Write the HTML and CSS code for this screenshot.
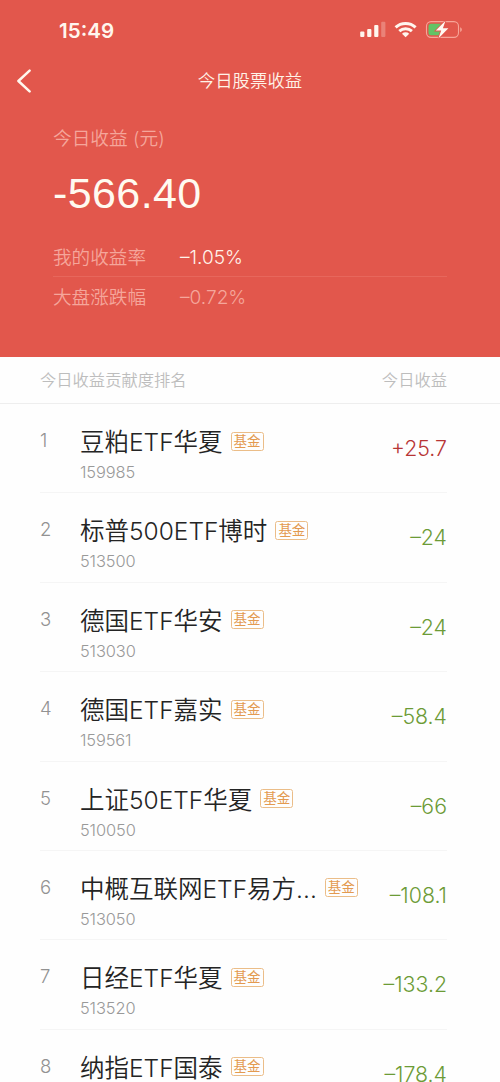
FILE: index.html
```html
<!DOCTYPE html>
<html lang="zh-CN">
<head>
<meta charset="utf-8">
<title>今日股票收益</title>
<link rel="stylesheet" href="styles.css">
</head>
<body>
<main class="screen">
  <header class="hero">
    <div class="status">
      <span class="clock">15:49</span>
      <svg class="status-icons" width="104" height="20" viewBox="0 0 104 20">
        <g fill="#fff6ee">
          <rect x="0.2" y="11.5" width="4.2" height="5.6" rx="1"/>
          <rect x="7.2" y="9" width="4.2" height="8.1" rx="1"/>
          <rect x="14.2" y="5" width="4.2" height="12.1" rx="1"/>
          <rect x="21.2" y="1.8" width="4.2" height="15.3" rx="1" opacity=".28"/>
          <path d="M45.6 17.2l-3.6-3.5a5.2 5.2 0 0 1 7.2 0z"/>
        </g>
        <g fill="none" stroke="#fff6ee" stroke-width="3">
          <path d="M35.6 7.3a14.8 14.8 0 0 1 20 0"/>
          <path d="M39.3 11.2a9.4 9.4 0 0 1 12.6 0"/>
        </g>
        <rect x="66.5" y="1.6" width="32" height="15.8" rx="4.6" fill="none" stroke="#f7a598" stroke-width="1.1"/>
        <path d="M100.2 7.2c2.2.8 2.2 3.9 0 4.7z" fill="#f7a598"/>
        <path d="M71 3.7h9.5v11.6H71a2.5 2.5 0 0 1-2.5-2.5V6.2A2.5 2.5 0 0 1 71 3.7z" fill="#63c466"/>
        <path d="M85.5.8L75.8 10.6h5.4L78.4 18.4l10-10.2h-5.5z" fill="#fff9f2" stroke="#e2574c" stroke-width="1.6" paint-order="stroke"/>
      </svg>
    </div>
    <nav class="nav">
      <svg class="back" width="16" height="26" viewBox="0 0 16 26"><path d="M12.6 2.6L1.4 13l11.2 10.4" fill="none" stroke="#fff8ee" stroke-width="2.5" stroke-linecap="round" stroke-linejoin="round"/></svg>
      <h1 class="title">今日股票收益</h1>
    </nav>
    <section class="summary">
      <p class="label">今日收益 (元)</p>
      <p class="total">-566.40</p>
      <div class="stat"><span>我的收益率</span><span class="rate bright">–1.05%</span></div>
      <div class="stat"><span>大盘涨跌幅</span><span class="rate">–0.72%</span></div>
    </section>
  </header>
  <div class="columns"><span>今日收益贡献度排名</span><span>今日收益</span></div>
  <ol class="list">
    <li class="row"><span class="rank">1</span><div class="fund"><div class="heading"><span class="name">豆粕ETF华夏</span><span class="tag">基金</span></div><span class="code">159985</span></div><span class="amount up">+25.7</span></li>
    <li class="row"><span class="rank">2</span><div class="fund"><div class="heading"><span class="name">标普500ETF博时</span><span class="tag">基金</span></div><span class="code">513500</span></div><span class="amount">–24</span></li>
    <li class="row"><span class="rank">3</span><div class="fund"><div class="heading"><span class="name">德国ETF华安</span><span class="tag">基金</span></div><span class="code">513030</span></div><span class="amount">–24</span></li>
    <li class="row"><span class="rank">4</span><div class="fund"><div class="heading"><span class="name">德国ETF嘉实</span><span class="tag">基金</span></div><span class="code">159561</span></div><span class="amount">–58.4</span></li>
    <li class="row"><span class="rank">5</span><div class="fund"><div class="heading"><span class="name">上证50ETF华夏</span><span class="tag">基金</span></div><span class="code">510050</span></div><span class="amount">–66</span></li>
    <li class="row"><span class="rank">6</span><div class="fund"><div class="heading"><span class="name">中概互联网ETF易方...</span><span class="tag">基金</span></div><span class="code">513050</span></div><span class="amount">–108.1</span></li>
    <li class="row"><span class="rank">7</span><div class="fund"><div class="heading"><span class="name">日经ETF华夏</span><span class="tag">基金</span></div><span class="code">513520</span></div><span class="amount">–133.2</span></li>
    <li class="row"><span class="rank">8</span><div class="fund"><div class="heading"><span class="name">纳指ETF国泰</span><span class="tag">基金</span></div></div><span class="amount">–178.4</span></li>
  </ol>
</main>
</body>
</html>
```
FILE: styles.css
```css
* { box-sizing: border-box; margin: 0; padding: 0; }
body { background: #fefefe; font-family: Inter, "Noto Sans CJK SC", sans-serif; font-weight: 350; }
.screen { width: 500px; height: 1082px; overflow: hidden; }
.hero { height: 357px; background: #e2574c; color: #f5a69b; }
.status { height: 60px; padding: 20px 36.5px 0 59px; display: flex; justify-content: space-between; align-items: flex-start; }
.clock { font: 600 20.6px/22px Inter, sans-serif; color: #fff6ee; }
.nav { height: 42px; padding: 0 17px; display: grid; grid-template-columns: 16px 1fr 16px; align-items: center; }
.title { font-size: 17.4px; line-height: 26px; font-weight: 350; color: #fff3e8; text-align: center; }
.summary { padding: 24px 53px 0; }
.label { font-size: 18.7px; line-height: 26px; }
.total { font-family: "Liberation Sans", sans-serif; font-size: 43px; line-height: 50px; letter-spacing: .4px; margin-top: 16px; color: #fffaf0; }
.stat { height: 40px; display: flex; align-items: center; font-size: 18.6px; line-height: 28px; }
.total + .stat { margin-top: 19px; border-bottom: 1px solid #e7675c; }
.rate { margin-left: 34px; font-size: 19.1px; }
.bright { color: #fff3ea; }
.columns { height: 47px; padding: 0 53px 3px 40px; display: flex; justify-content: space-between; align-items: center; border-bottom: 1px solid #eee; font-size: 16.3px; color: #bdbdbd; }
.list { list-style: none; margin: 0 53px 0 40px; }
.row { height: 89.4px; display: grid; grid-template-columns: 40px 1fr auto; align-items: start; border-bottom: 1px solid #f5f5f5; }
.rank { padding-top: 24px; font-size: 18.5px; line-height: 24px; color: #929292; }
.fund { padding-top: 20px; }
.heading { height: 34px; display: flex; align-items: center; }
.name { margin-top: 2px; font-size: 24.5px; line-height: 34px; color: #242424; white-space: nowrap; }
.tag { width: 33px; height: 19px; margin-left: 8px; border: 1px solid #ebbd88; border-radius: 2.5px; font-size: 13.5px; line-height: 16px; font-weight: 400; text-align: center; color: #e39a50; }
.code { display: block; margin-top: 4px; font-size: 16.4px; line-height: 20px; letter-spacing: -.1px; color: #999; }
.amount { padding-top: 30px; font-size: 21.3px; line-height: 28px; color: #6c9b36; }
.up { color: #b73535; }
```
